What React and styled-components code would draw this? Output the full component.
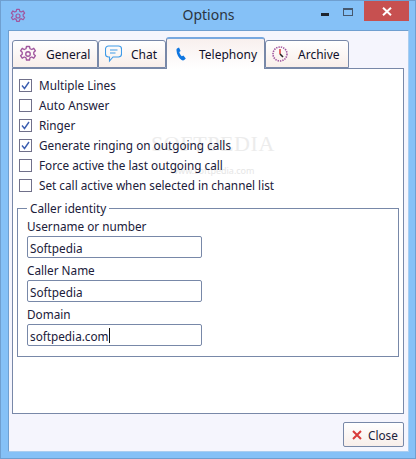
import styled, { createGlobalStyle } from "styled-components";

const GlobalStyle = createGlobalStyle`
    html, body {
        margin: 0;
        padding: 0;
        background: #85c1f7;
    }
    body {
        font-family: "Noto Sans", "DejaVu Sans", sans-serif;
        font-size: 11.75px;
        color: #20203a;
    }
`

const Window = styled.div`
    position: relative;
    box-sizing: border-box;
    width: 416px;
    height: 459px;
    display: flex;
    flex-direction: column;
    background: #85c1f7;
    border: 1px solid #6f9fd0;
    overflow: hidden;
`

const TitleBar = styled.div`
    height: 29px;
    flex: none;
    display: flex;
    align-items: flex-start;
    padding-left: 9px;
`

const TitleIcon = styled.div`
    width: 18px;
    height: 29px;
    display: flex;
    align-items: center;
`

const Title = styled.div`
    flex: 1;
    text-align: center;
    font-size: 14px;
    line-height: 28px;
    color: #2b3440;
    padding-left: 76px;
`

const WindowButtons = styled.div`
    display: flex;
    align-items: flex-start;
    margin-right: 6px;
`

const MinButton = styled.div`
    width: 24px;
    height: 21px;
    display: flex;
    align-items: center;
    justify-content: center;
    &::before {
        content: "";
        width: 8px;
        height: 3px;
        margin-top: 6px;
        background: #1d2530;
    }
`

const MaxButton = styled.div`
    width: 21px;
    height: 21px;
    display: flex;
    justify-content: center;
    margin-right: 6px;
    &::before {
        content: "";
        box-sizing: border-box;
        width: 10px;
        height: 8px;
        margin-top: 7px;
        border: 1px solid #46586e;
        border-top-width: 2px;
    }
`

const CloseButton = styled.div`
    width: 45px;
    height: 20px;
    background: #c75050;
    display: flex;
    align-items: center;
    justify-content: center;
`

const Client = styled.div`
    flex: 1;
    margin: 0 6px 7px 7px;
    background: #f5f5fd;
    border: 1px solid #6f9fd0;
    border-right-color: #a9cdf0;
    border-bottom-color: #a9cdf0;
    padding: 6px 4px 4px 3px;
    display: flex;
    flex-direction: column;
`

const TabBar = styled.div`
    height: 31px;
    flex: none;
    display: flex;
    align-items: flex-end;
    position: relative;
    z-index: 1;
`

const Tab = styled.div`
    box-sizing: border-box;
    width: ${(p) => p.$width}px;
    height: ${(p) => (p.$active ? 32 : 28)}px;
    margin-bottom: ${(p) => (p.$active ? -1 : 0)}px;
    display: flex;
    align-items: center;
    padding-left: ${(p) => p.$pad}px;
    gap: ${(p) => p.$gap}px;
    font-size: 12px;
    color: #10102a;
    border: 1px solid #7888a8;
    border-bottom: ${(p) => (p.$active ? "none" : "1px solid #7888a8")};
    border-top: ${(p) => (p.$active ? "2px solid #78a8e0" : "1px solid #7888a8")};
    border-radius: 3px 3px 0 0;
    background: ${(p) =>
        p.$active
            ? "linear-gradient(#f8f0ee, #ffffff)"
            : "linear-gradient(#ffffff, #f8eeea)"};
`

const Panel = styled.div`
    position: relative;
    box-sizing: border-box;
    height: 346px;
    flex: none;
    background: #fff;
    border: 1px solid #7888a8;
    padding: 6px 4px 0 4px;
`

const CheckList = styled.div`
    position: relative;
    display: flex;
    flex-direction: column;
`

const CheckRow = styled.div`
    height: 20px;
    display: flex;
    align-items: center;
    padding-left: 2px;
    gap: 7px;
    white-space: nowrap;
`

const Box = styled.span`
    box-sizing: border-box;
    width: 13px;
    height: 13px;
    flex: none;
    display: flex;
    align-items: center;
    justify-content: center;
    border: 1px solid #70708a;
    background: #fff;
`

const Group = styled.fieldset`
    box-sizing: border-box;
    margin: 5px 0 0 0;
    padding: 0 9px;
    height: 157px;
    border: 1px solid #7888a8;
    width: 382px;
`

const GroupTitle = styled.legend`
    margin-left: 0;
    padding: 0 3px;
    line-height: 16px;
`

const FieldLabel = styled.div`
    height: 20px;
    line-height: 20px;
`

const Field = styled.div`
    box-sizing: border-box;
    width: 175px;
    height: 22px;
    margin-bottom: 2px;
    border: 1px solid #7888a8;
    border-radius: 2px;
    padding: 1px 0 0 2px;
    background: #fff;
    display: flex;
    align-items: center;
`

const Caret = styled.span`
    width: 1px;
    height: 15px;
    background: #111;
`

const Footer = styled.div`
    flex: 1;
    display: flex;
    align-items: flex-start;
    justify-content: flex-end;
    padding-top: 8px;
`

const CloseAction = styled.div`
    box-sizing: border-box;
    width: 61px;
    height: 25px;
    display: flex;
    align-items: center;
    padding-left: 8px;
    gap: 6px;
    border: 1px solid #7888a8;
    border-radius: 2px;
    background: linear-gradient(#ffffff, #f8eeea);
`

const Watermark = styled.div`
    position: absolute;
    left: 138px;
    top: 62px;
    font-family: "Liberation Serif", serif;
    font-size: 22px;
    letter-spacing: 0.6px;
    color: #ececec;
    pointer-events: none;
`

const WatermarkUrl = styled.div`
    position: absolute;
    left: 158px;
    top: 95px;
    font-size: 9px;
    color: #e6e6e6;
    pointer-events: none;
`

function GearIcon({ size = 18 }) {
    return (
        <svg width={size} height={size} viewBox="0 0 24 24" fill="none" stroke="#a0569f" strokeWidth="1.8" strokeLinejoin="round">
            <path d="M10 2h4l.7 3 2.3 1 2.7-1.6 2.2 3.4-2.2 2v2.4l2.2 2-2.2 3.4-2.7-1.6-2.3 1-.7 3h-4l-.7-3-2.3-1-2.7 1.6-2.2-3.4 2.2-2v-2.4l-2.2-2 2.2-3.4L7 6l2.3-1z" />
            <circle cx="12" cy="12" r="3" />
        </svg>
    )
}

function ChatIcon() {
    return (
        <svg width="17" height="18" viewBox="0 0 17 18" fill="none" stroke="#3f9be8" strokeWidth="1.1">
            <path d="M3.5 1h10a3 3 0 0 1 3 3v5a3 3 0 0 1-3 3H8l-3.5 4v-4h-1a3 3 0 0 1-3-3V4a3 3 0 0 1 3-3z" />
            <path d="M5 5h7.5M5 8h5.5" strokeWidth="1.2" />
        </svg>
    )
}

function PhoneIcon() {
    return (
        <svg width="11" height="15" viewBox="0 0 11 15">
            <path d="M1 1.6 3 .6l1.6 3.3-1.3 1c.3 1.6 1.3 3.2 2.6 4.3l1.5-.6 2.4 2.9-1.6 1.5c-.8.6-1.8.5-2.6-.1C2.6 11 .8 7.4.5 3.4.4 2.6.5 2 1 1.6z" fill="#0f76e0" />
        </svg>
    )
}

function ClockIcon() {
    return (
        <svg width="16" height="16" viewBox="0 0 16 16" fill="none">
            <circle cx="8" cy="8" r="7" stroke="#a0569f" strokeWidth="1.6" strokeDasharray="1.4 1" />
            <path d="M8 3v5" stroke="#d8302a" strokeWidth="1.4" />
            <path d="M8 8l3 3" stroke="#222" strokeWidth="1.6" />
        </svg>
    )
}

function CheckBox({ checked }) {
    return (
        <Box>
            {checked && (
                <svg width="9" height="9" viewBox="0 0 9 9" fill="none">
                    <path d="M1 4.5 3.5 7.5 8 1" stroke="#3c5fb0" strokeWidth="1.4" />
                </svg>
            )}
        </Box>
    )
}

const options = [
    { label: "Multiple Lines", checked: true },
    { label: "Auto Answer", checked: false },
    { label: "Ringer", checked: true },
    { label: "Generate ringing on outgoing calls", checked: true },
    { label: "Force active the last outgoing call", checked: false },
    { label: "Set call active when selected in channel list", checked: false },
]

function App() {
    return (
        <Window>
            <GlobalStyle />
            <TitleBar>
                <TitleIcon><GearIcon size={16} /></TitleIcon>
                <Title>Options</Title>
                <WindowButtons>
                    <MinButton />
                    <MaxButton />
                    <CloseButton>
                        <svg width="10" height="9" viewBox="0 0 10 9">
                            <path d="M1 .8 9 8.2M9 .8 1 8.2" stroke="#fff" strokeWidth="2" />
                        </svg>
                    </CloseButton>
                </WindowButtons>
            </TitleBar>
            <Client>
                <TabBar>
                    <Tab $width={86} $pad={6} $gap={9}><GearIcon />General</Tab>
                    <Tab $width={68} $pad={6} $gap={9}><ChatIcon />Chat</Tab>
                    <Tab $active $width={99} $pad={9} $gap={12}><PhoneIcon />Telephony</Tab>
                    <Tab $width={84} $pad={6} $gap={10}><ClockIcon />Archive</Tab>
                </TabBar>
                <Panel>
                    <Watermark>SOFTPEDIA</Watermark>
                    <WatermarkUrl>www.softpedia.com</WatermarkUrl>
                    <CheckList>
                        {options.map((item) => (
                            <CheckRow key={item.label}>
                                <CheckBox checked={item.checked} />
                                {item.label}
                            </CheckRow>
                        ))}
                    </CheckList>
                    <Group>
                        <GroupTitle>Caller identity</GroupTitle>
                        <FieldLabel>Username or number</FieldLabel>
                        <Field>Softpedia</Field>
                        <FieldLabel>Caller Name</FieldLabel>
                        <Field>Softpedia</Field>
                        <FieldLabel>Domain</FieldLabel>
                        <Field>softpedia.com<Caret /></Field>
                    </Group>
                </Panel>
                <Footer>
                    <CloseAction>
                        <svg width="10" height="10" viewBox="0 0 10 10">
                            <path d="M1 1l8 8M9 1 1 9" stroke="#d83a3a" strokeWidth="2" />
                        </svg>
                        Close
                    </CloseAction>
                </Footer>
            </Client>
        </Window>
    )
}

export default App
